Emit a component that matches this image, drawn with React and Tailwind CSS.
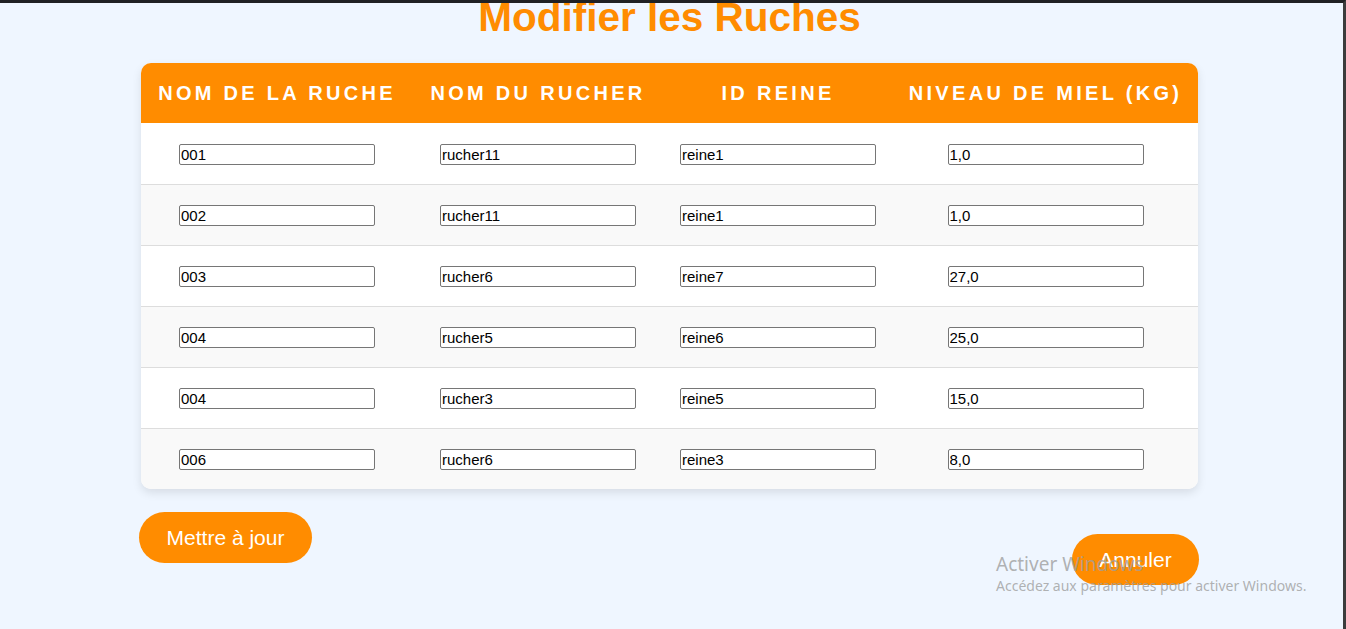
const rows = [
  { ruche: "001", rucher: "rucher11", reine: "reine1", miel: "1,0" },
  { ruche: "002", rucher: "rucher11", reine: "reine1", miel: "1,0" },
  { ruche: "003", rucher: "rucher6", reine: "reine7", miel: "27,0" },
  { ruche: "004", rucher: "rucher5", reine: "reine6", miel: "25,0" },
  { ruche: "004", rucher: "rucher3", reine: "reine5", miel: "15,0" },
  { ruche: "006", rucher: "rucher6", reine: "reine3", miel: "8,0" },
];

function Cell({ value }) {
  return (
    <td className="h-[61px] p-0 pt-[2px] text-center align-middle">
      <input
        type="text"
        defaultValue={value}
        className="mx-auto block h-[21px] w-[196px] rounded-[2px] border border-[#767676] bg-white px-[1px] text-[15px] leading-[17px] text-black outline-none"
      />
    </td>
  );
}

export default function App() {
  return (
    <div className="relative h-[629px] overflow-hidden border-t-[3px] border-r-[3px] border-t-[#202124] border-r-[#3c3c3c] bg-[#eff6ff] pr-[4px] font-['Liberation_Sans',Arial,sans-serif]">
      {/* Titre */}
      <h1 className="mt-[-6px] mb-[26px] text-center text-[40.5px] font-bold leading-[40px] text-[#ff8c00]">
        Modifier les Ruches
      </h1>

      {/* Tableau */}
      <div className="mx-auto w-[1057px] overflow-hidden rounded-[10px] bg-white shadow-[0_4px_10px_rgba(0,0,0,0.1)]">
        <table className="w-full table-fixed border-collapse">
          <colgroup>
            <col className="w-[272px]" />
            <col className="w-[250px]" />
            <col className="w-[230px]" />
            <col className="w-[305px]" />
          </colgroup>
          <thead>
            <tr className="h-[60px] bg-[#ff8c00] text-white">
              <th className="p-0 text-center text-[20px] font-bold uppercase tracking-[3.3px]">Nom de la ruche</th>
              <th className="p-0 text-center text-[20px] font-bold uppercase tracking-[3.3px]">Nom du rucher</th>
              <th className="p-0 text-center text-[20px] font-bold uppercase tracking-[3.3px]">ID Reine</th>
              <th className="p-0 text-center text-[20px] font-bold uppercase tracking-[3.3px]">Niveau de miel (kg)</th>
            </tr>
          </thead>
          <tbody>
            {rows.map((r, i) => (
              <tr
                key={i}
                className={`${i % 2 === 1 ? "bg-[#f9f9f9]" : "bg-white"} ${
                  i < rows.length - 1 ? "border-b border-[#dddddd]" : ""
                }`}
              >
                <Cell value={r.ruche} />
                <Cell value={r.rucher} />
                <Cell value={r.reine} />
                <Cell value={r.miel} />
              </tr>
            ))}
          </tbody>
        </table>
      </div>

      {/* Boutons */}
      <div className="mx-auto mt-[23px] flex w-[1061px] items-start justify-between">
        <button className="h-[51px] w-[173px] rounded-full bg-[#ff8c00] text-[21px] text-white">
          Mettre à jour
        </button>
        <button className="mt-[22px] mr-[1px] h-[51px] w-[127px] rounded-full bg-[#ff8c00] text-[21px] text-white">
          Annuler
        </button>
      </div>

      {/* Filigrane Windows */}
      <div className="pointer-events-none absolute left-[996px] top-[549px] font-['Noto_Sans',sans-serif] text-[#9e9e9e]/80">
        <div className="text-[19px] leading-[25px]">Activer Windows</div>
        <div className="text-[14px] leading-[18px]">Accédez aux paramètres pour activer Windows.</div>
      </div>
    </div>
  );
}
